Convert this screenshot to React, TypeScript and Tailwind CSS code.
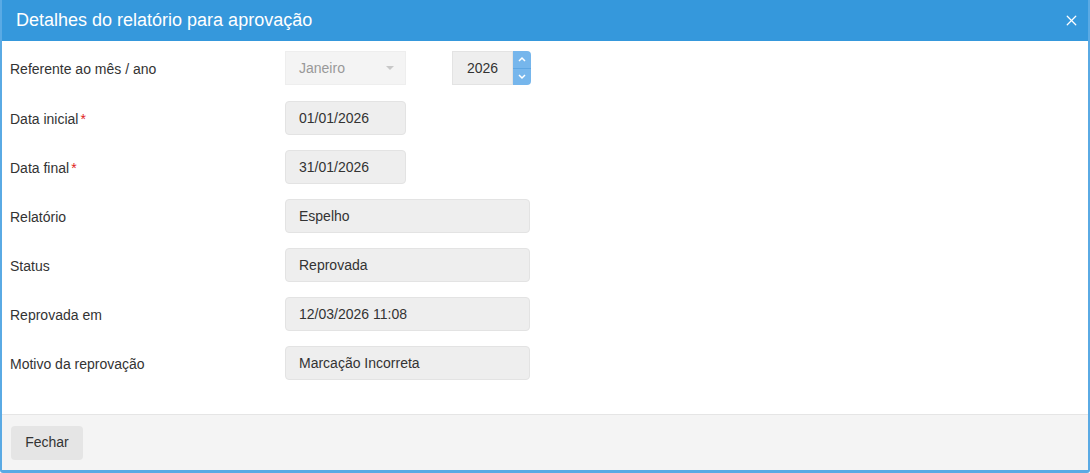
import { X } from "lucide-react";

const FONT = { fontFamily: '"Liberation Sans", Arial, sans-serif' };

type Linha = { label: string; valor: string; obrigatorio?: boolean; largo?: boolean };

const LINHAS: Linha[] = [
  { label: "Data inicial", valor: "01/01/2026", obrigatorio: true },
  { label: "Data final", valor: "31/01/2026", obrigatorio: true },
  { label: "Relatório", valor: "Espelho", largo: true },
  { label: "Status", valor: "Reprovada", largo: true },
  { label: "Reprovada em", valor: "12/03/2026 11:08", largo: true },
  { label: "Motivo da reprovação", valor: "Marcação Incorreta", largo: true },
];

function Campo({ valor, largo }: { valor: string; largo?: boolean }) {
  return (
    <div
      className={`flex h-[34px] items-center rounded-[4px] border border-[#e3e3e3] bg-[#eeeeee] pl-[13px] text-[14px] text-[#333333] ${
        largo ? "w-[245px]" : "w-[121px]"
      }`}
    >
      {valor}
    </div>
  );
}

export default function App() {
  return (
    <div
      className="flex h-[473px] w-[1090px] flex-col overflow-hidden rounded-b-[3px] border-b-[3px] border-l-[2px] border-r-[2px] border-[#5aaae4] bg-white"
      style={FONT}
    >
      <div className="-mx-[2px] flex h-[41px] shrink-0 items-center justify-between bg-[#3598dc] pl-[16px] pr-[10px]">
        <h1 className="text-[18px] text-white">Detalhes do relatório para aprovação</h1>
        <X className="h-[17px] w-[17px] text-white" strokeWidth={1.8} />
      </div>

      <div className="flex flex-1 flex-col gap-[15px] pl-[8px] pt-[10px]">
        <div className="mb-[1px] flex h-[34px] items-center">
          <div className="w-[275px] pt-[2px] text-[14px] text-[#333333]">Referente ao mês / ano</div>
          <div className="flex h-[34px] w-[121px] items-center justify-between border border-[#eeeeee] bg-[#f4f4f4] pl-[13px] pr-[11px] text-[14px] text-[#999999]">
            <span>Janeiro</span>
            <span className="h-0 w-0 border-l-[4px] border-r-[4px] border-t-[4px] border-l-transparent border-r-transparent border-t-[#c8c8c8]" />
          </div>
          <div className="ml-[46px] flex h-[34px] items-stretch">
            <div className="flex w-[61px] items-center justify-center border border-[#e3e3e3] bg-[#eeeeee] text-[14px] text-[#333333]">
              2026
            </div>
            <div className="flex w-[18px] flex-col overflow-hidden rounded-r-[4px] bg-[#76b6ec]">
              <div className="flex flex-1 items-center justify-center border-b border-[#5ea6e3]">
                <svg width="8" height="6" viewBox="0 0 8 6" fill="none">
                  <path d="M1 5l3-3 3 3" stroke="white" strokeWidth="1.5" />
                </svg>
              </div>
              <div className="flex flex-1 items-center justify-center">
                <svg width="8" height="6" viewBox="0 0 8 6" fill="none">
                  <path d="M1 1l3 3 3-3" stroke="white" strokeWidth="1.5" />
                </svg>
              </div>
            </div>
          </div>
        </div>

        {LINHAS.map((linha) => (
          <div key={linha.label} className="flex h-[34px] items-center">
            <div className="w-[275px] pt-[3px] text-[14px] text-[#333333]">
              {linha.label}
              {linha.obrigatorio ? <span className="ml-[2px] text-[#e02222]">*</span> : null}
            </div>
            <Campo valor={linha.valor} largo={linha.largo} />
          </div>
        ))}
      </div>

      <div className="flex h-[56px] shrink-0 items-center border-t border-[#e5e5e5] bg-[#f4f4f4] pl-[9px]">
        <button className="h-[34px] w-[72px] rounded-[4px] bg-[#e5e5e5] text-[14px] text-[#333333]">
          Fechar
        </button>
      </div>
    </div>
  );
}
